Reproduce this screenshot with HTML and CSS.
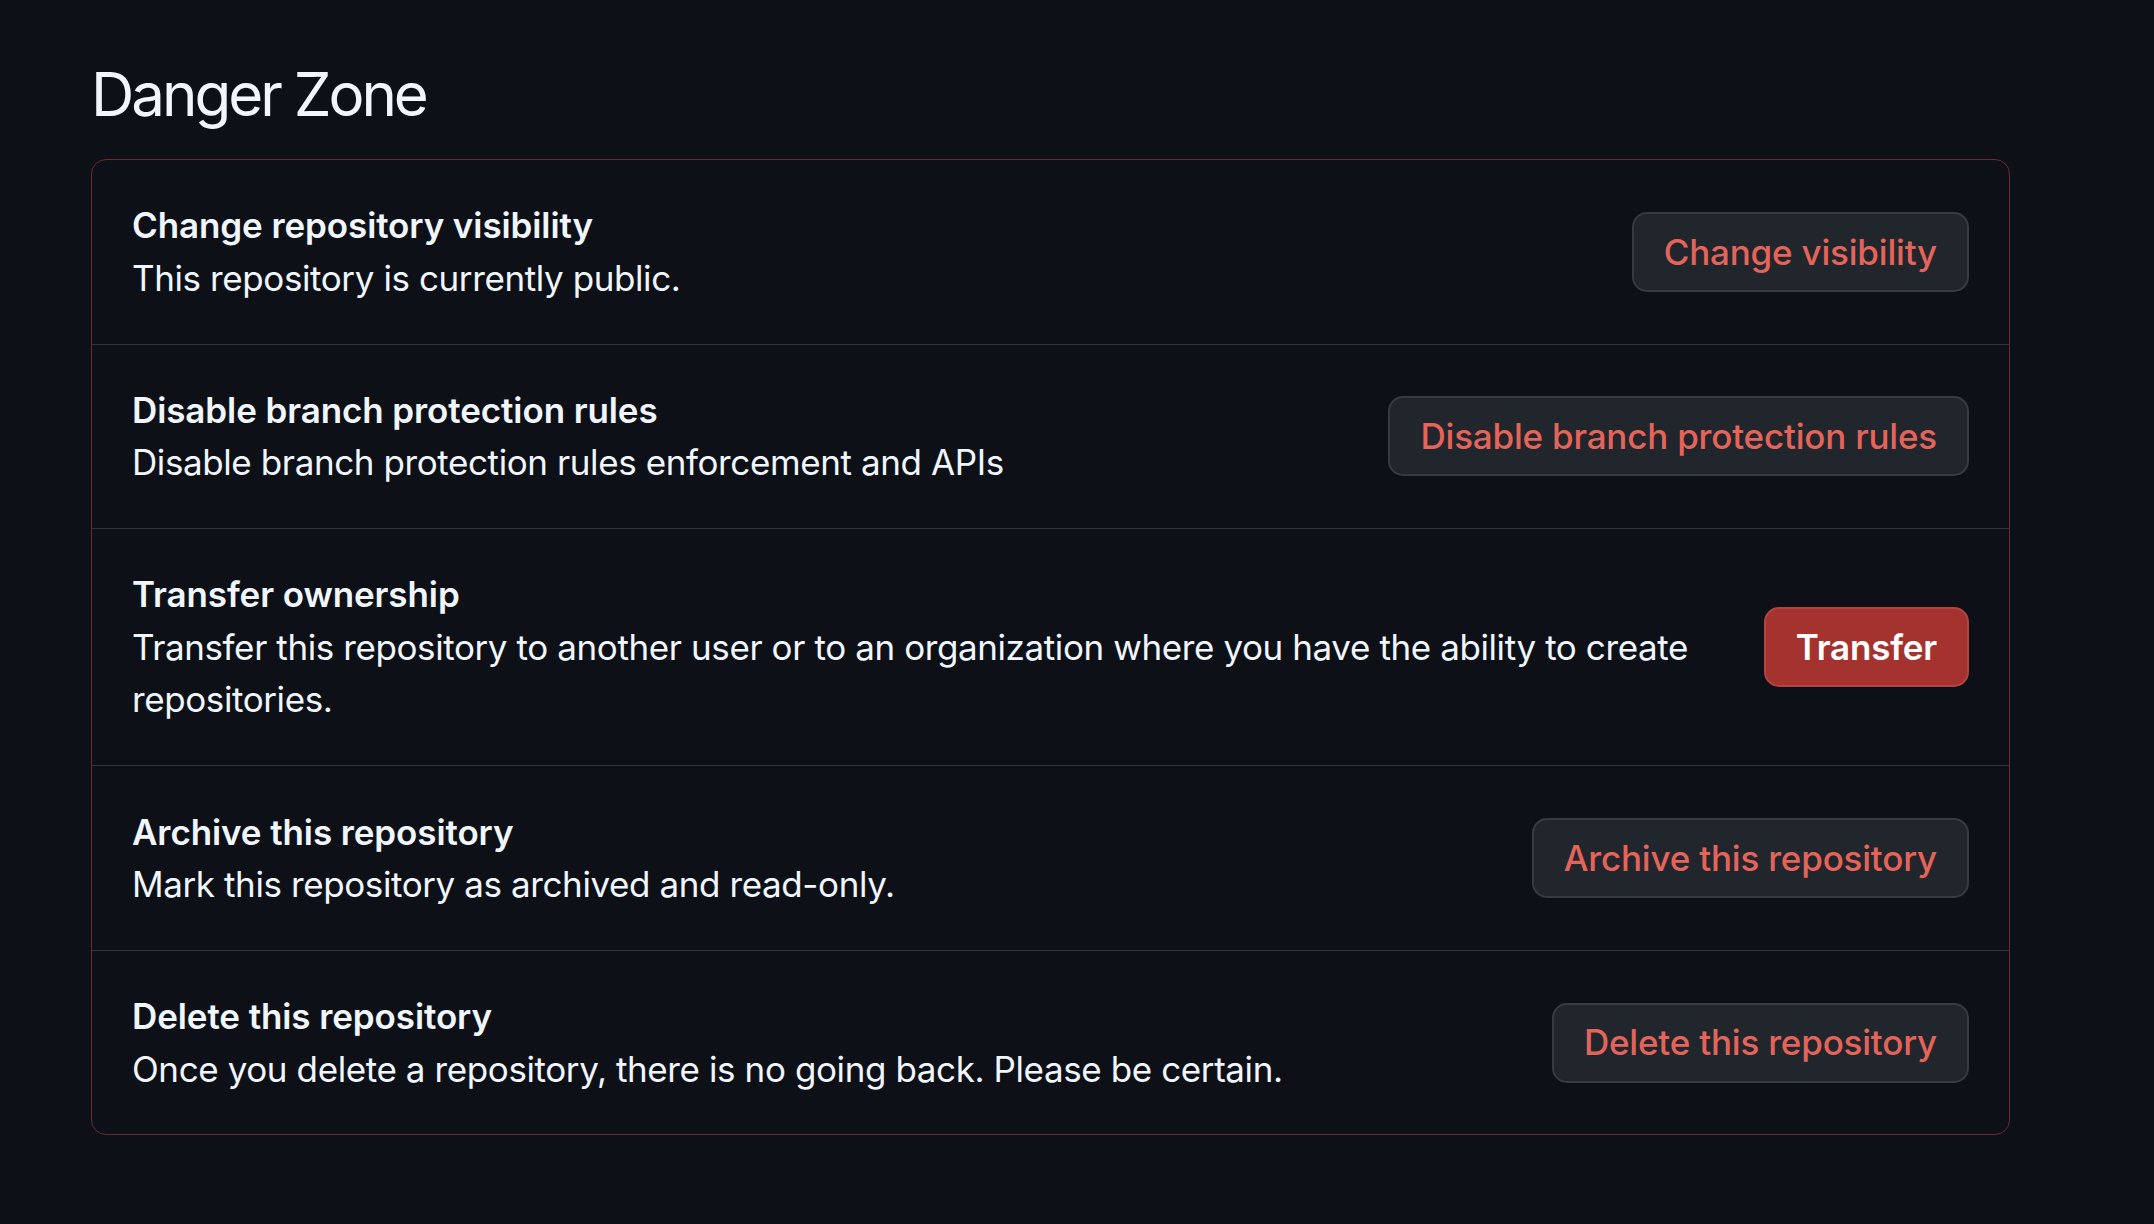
FILE: index.html
```html
<!DOCTYPE html>
<html lang="en">
<head>
<meta charset="utf-8">
<title>Danger Zone</title>
<link rel="stylesheet" href="styles.css">
</head>
<body>
<main class="page">
  <h2 class="subhead">Danger Zone</h2>
  <div class="box box-danger">
    <div class="row">
      <div class="row-text">
        <strong class="row-title">Change repository visibility</strong>
        <p class="row-desc">This repository is currently public.</p>
      </div>
      <button class="btn btn-danger">Change visibility</button>
    </div>
    <div class="row">
      <div class="row-text">
        <strong class="row-title">Disable branch protection rules</strong>
        <p class="row-desc">Disable branch protection rules enforcement and APIs</p>
      </div>
      <button class="btn btn-danger">Disable branch protection rules</button>
    </div>
    <div class="row">
      <div class="row-text">
        <strong class="row-title">Transfer ownership</strong>
        <p class="row-desc">Transfer this repository to another user or to an organization where you have the ability to create repositories.</p>
      </div>
      <button class="btn btn-danger-solid">Transfer</button>
    </div>
    <div class="row">
      <div class="row-text">
        <strong class="row-title">Archive this repository</strong>
        <p class="row-desc">Mark this repository as archived and read-only.</p>
      </div>
      <button class="btn btn-danger">Archive this repository</button>
    </div>
    <div class="row">
      <div class="row-text">
        <strong class="row-title">Delete this repository</strong>
        <p class="row-desc">Once you delete a repository, there is no going back. Please be certain.</p>
      </div>
      <button class="btn btn-danger">Delete this repository</button>
    </div>
  </div>
</main>
</body>
</html>
```

FILE: styles.css
```css
html, body {
  margin: 0;
  padding: 0;
  background: #0d1117;
}
body {
  font-family: Inter, "Noto Sans", "Liberation Sans", sans-serif;
  color: #f0f6fc;
  font-size: 35px;
  line-height: 52.5px;
}
.page {
  padding: 57px 0 0 91px;
}
.subhead {
  margin: 0 0 27px 0;
  font-size: 60px;
  line-height: 75px;
  font-weight: 400;
  letter-spacing: -3px;
  color: #f0f6fc;
}
.box {
  width: 1919px;
  box-sizing: border-box;
  border: 1px solid #6b2b2b;
  border-radius: 15px;
}
.row {
  display: flex;
  align-items: center;
  gap: 40px;
  padding: 39.3px 40px;
  border-top: 1px solid #30363d;
}
.row:first-child {
  border-top: none;
}
.row-text {
  flex: 1 1 auto;
  min-width: 0;
}
.row-title {
  display: block;
  font-weight: 600;
  letter-spacing: -0.1px;
}
.row-desc {
  margin: 0;
  letter-spacing: -0.4px;
}
.btn {
  flex: 0 0 auto;
  box-sizing: border-box;
  height: 80px;
  padding: 0 30px;
  border-radius: 15px;
  font-family: inherit;
  font-size: 35px;
  font-weight: 500;
  line-height: 52.5px;
  letter-spacing: -0.2px;
  white-space: nowrap;
  cursor: pointer;
}
.btn-danger {
  background: #21262d;
  border: 2px solid #363b42;
  color: #e5645a;
}
.btn-danger-solid {
  background: #a4332f;
  border: 2px solid #b3443f;
  color: #ffffff;
  font-weight: 600;
  box-shadow: 0 1px 0 rgba(0, 0, 0, 0.2);
}
```
